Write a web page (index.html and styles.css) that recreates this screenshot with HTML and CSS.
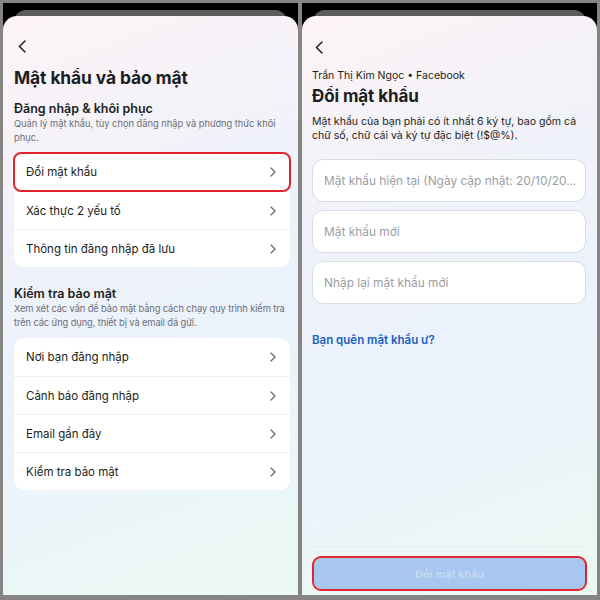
FILE: index.html
```html
<!DOCTYPE html>
<html lang="vi">
<head>
<meta charset="utf-8">
<link rel="stylesheet" href="styles.css">
</head>
<body>
<div class="frame">
  <div class="phone">
    <div class="backsheet"></div>
    <div class="sheet sheet-left">
      <div class="back"><svg width="10" height="13" viewBox="0 0 10 13"><path d="M8 1 L2.5 6.5 L8 12" fill="none" stroke="#1c1e21" stroke-width="1.5" stroke-linecap="round" stroke-linejoin="round"/></svg></div>
      <h1 class="title">Mật khẩu và bảo mật</h1>
      <h2 class="sec-title">Đăng nhập &amp; khôi phục</h2>
      <p class="sec-desc">Quản lý mật khẩu, tùy chọn đăng nhập và phương thức khôi phục.</p>
      <div class="card">
        <div class="row row-hl"><span>Đổi mật khẩu</span><svg class="chev" width="6" height="10" viewBox="0 0 6 10"><path d="M1 1 L5 5 L1 9" fill="none" stroke="#606770" stroke-width="1.2" stroke-linecap="round" stroke-linejoin="round"/></svg></div>
        <div class="row"><span>Xác thực 2 yếu tố</span><svg class="chev" width="6" height="10" viewBox="0 0 6 10"><path d="M1 1 L5 5 L1 9" fill="none" stroke="#606770" stroke-width="1.2" stroke-linecap="round" stroke-linejoin="round"/></svg></div>
        <div class="row"><span>Thông tin đăng nhập đã lưu</span><svg class="chev" width="6" height="10" viewBox="0 0 6 10"><path d="M1 1 L5 5 L1 9" fill="none" stroke="#606770" stroke-width="1.2" stroke-linecap="round" stroke-linejoin="round"/></svg></div>
      </div>
      <h2 class="sec-title sec-two">Kiểm tra bảo mật</h2>
      <p class="sec-desc sec-desc-tight">Xem xét các vấn đề bảo mật bằng cách chạy quy trình kiểm tra trên các ứng dụng, thiết bị và email đã gửi.</p>
      <div class="card">
        <div class="row"><span>Nơi bạn đăng nhập</span><svg class="chev" width="6" height="10" viewBox="0 0 6 10"><path d="M1 1 L5 5 L1 9" fill="none" stroke="#606770" stroke-width="1.2" stroke-linecap="round" stroke-linejoin="round"/></svg></div>
        <div class="row"><span>Cảnh báo đăng nhập</span><svg class="chev" width="6" height="10" viewBox="0 0 6 10"><path d="M1 1 L5 5 L1 9" fill="none" stroke="#606770" stroke-width="1.2" stroke-linecap="round" stroke-linejoin="round"/></svg></div>
        <div class="row"><span>Email gần đây</span><svg class="chev" width="6" height="10" viewBox="0 0 6 10"><path d="M1 1 L5 5 L1 9" fill="none" stroke="#606770" stroke-width="1.2" stroke-linecap="round" stroke-linejoin="round"/></svg></div>
        <div class="row"><span>Kiểm tra bảo mật</span><svg class="chev" width="6" height="10" viewBox="0 0 6 10"><path d="M1 1 L5 5 L1 9" fill="none" stroke="#606770" stroke-width="1.2" stroke-linecap="round" stroke-linejoin="round"/></svg></div>
      </div>
    </div>
  </div>
  <div class="phone">
    <div class="backsheet"></div>
    <div class="sheet sheet-right">
      <div class="back back-r"><svg width="10" height="13" viewBox="0 0 10 13"><path d="M8 1 L2.5 6.5 L8 12" fill="none" stroke="#1c1e21" stroke-width="1.5" stroke-linecap="round" stroke-linejoin="round"/></svg></div>
      <div class="account">Trần Thị Kim Ngọc • Facebook</div>
      <h1 class="title title-r">Đổi mật khẩu</h1>
      <p class="desc-r">Mật khẩu của bạn phải có ít nhất 6 ký tự, bao gồm cả chữ số, chữ cái và ký tự đặc biệt (!$@%).</p>
      <div class="fields">
        <div class="field">Mật khẩu hiện tại (Ngày cập nhật: 20/10/20...</div>
        <div class="field">Mật khẩu mới</div>
        <div class="field">Nhập lại mật khẩu mới</div>
      </div>
      <div class="link">Bạn quên mật khẩu ư?</div>
      <div class="spacer"></div>
      <div class="footer">
        <div class="btn">Đổi mật khẩu</div>
      </div>
    </div>
  </div>
</div>
</body>
</html>
```
FILE: styles.css
```css
* { box-sizing: border-box; }
html, body { margin: 0; padding: 0; }
body {
  width: 600px;
  height: 600px;
  background: #878584;
  font-family: Inter, "Noto Sans", sans-serif;
  color: #1c1e21;
}
.frame {
  display: flex;
  gap: 4px;
  padding: 3px 3px 5px 3px;
  height: 600px;
}
.phone {
  width: 295px;
  height: 592px;
  background: #000;
  display: flex;
  flex-direction: column;
  padding-top: 7px;
  overflow: hidden;
}
.backsheet {
  height: 14px;
  margin: 0 11px;
  background: #5c5c5c;
  border-radius: 12px 12px 0 0;
  flex: none;
}
.sheet {
  flex: 1;
  margin-top: -8px;
  border-radius: 14px 14px 0 0;
  background: linear-gradient(160deg, #fdf4f6 0%, #f1f2fa 30%, #ebf2fc 55%, #ebf5fa 75%, #ebf9f1 100%);
  display: flex;
  flex-direction: column;
}
.sheet-left { padding: 24px 8px 0 11px; }
.sheet-right { padding: 25px 11px 0 10px; }
.back { height: 13px; padding-left: 3px; line-height: 0; }
.back-r { padding-left: 2px; }
.title {
  margin: 14px 0 0 0;
  font-size: 17.4px;
  font-weight: 700;
  line-height: 22px;
  letter-spacing: -0.1px;
}
.sec-title {
  margin: 12px 0 0 0;
  font-size: 12.5px;
  font-weight: 600;
  line-height: 16px;
}
.sec-two { margin-top: 19px; }
.sec-desc {
  margin: 0;
  font-size: 9.3px;
  line-height: 14px;
  color: #6b6f75;
}
.sec-desc-tight { letter-spacing: -0.1px; }
.card {
  margin-top: 8px;
  background: #fff;
  border-radius: 10px;
}
.row {
  height: 38px;
  display: flex;
  align-items: center;
  justify-content: space-between;
  padding: 0 14px 0 12px;
  font-size: 11.5px;
  border-top: 1px solid #eceef1;
}
.row:first-child { border-top: none; }
.row-hl {
  border-radius: 7px;
  outline: 2px solid #e3242e;
  outline-offset: -1px;
  position: relative;
}
.chev { flex: none; }
.account {
  margin-top: 15px;
  font-size: 10.5px;
  line-height: 14px;
  color: #1c1e21;
}
.title-r { margin-top: 2px; font-size: 17px; }
.desc-r {
  margin: 8px 0 0 0;
  font-size: 10.55px;
  line-height: 14px;
  color: #1c1e21;
}
.fields {
  margin-top: 16px;
  display: flex;
  flex-direction: column;
  gap: 8px;
}
.field {
  height: 43px;
  background: #fff;
  border: 1px solid #dadde1;
  border-radius: 11px;
  display: flex;
  align-items: center;
  padding-left: 11px;
  font-size: 11.9px;
  color: #9a9ea4;
  white-space: nowrap;
  overflow: hidden;
}
.link {
  margin-top: 28px;
  font-size: 11.5px;
  font-weight: 600;
  color: #1b5fbd;
  line-height: 16px;
}
.spacer { flex: 1; }
.footer {
  border-top: 1px solid #e6ecf3;
  padding: 11px 1px 6px 2px;
}
.btn {
  height: 31px;
  border-radius: 7px;
  background: #a7c7f0;
  outline: 2px solid #e3242e;
  outline-offset: 0px;
  display: flex;
  align-items: center;
  justify-content: center;
  font-size: 11px;
  font-weight: 600;
  color: #c6daf5;
}
```
